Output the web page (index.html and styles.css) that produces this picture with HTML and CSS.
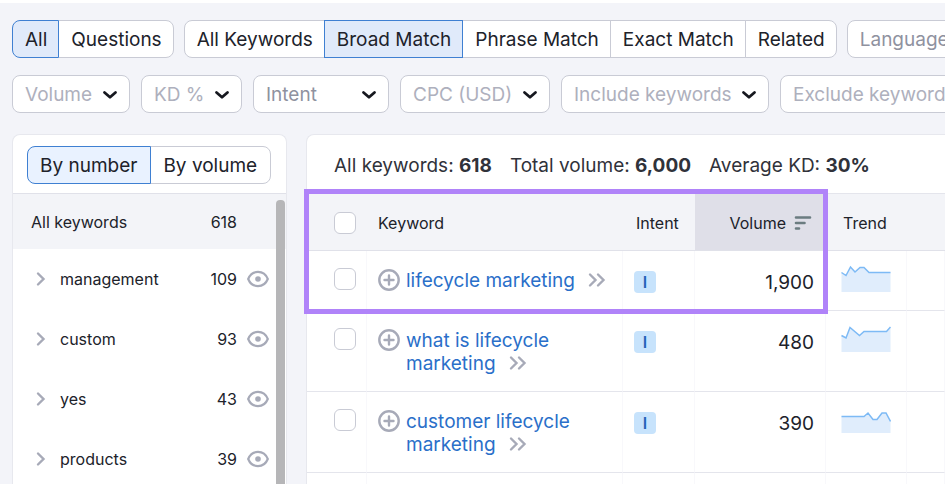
FILE: index.html
```
<!DOCTYPE html>
<html lang="en">
<head>
  <meta charset="UTF-8">
  <meta name="viewport" content="width=device-width, initial-scale=1">
  <title>Keyword Magic Tool</title>
  <link rel="stylesheet" href="styles.css">
</head>
<body>
  <!-- Shared icons -->
  <svg class="sprite" aria-hidden="true">
    <symbol id="chevron-down" viewBox="0 0 16 10"><path d="M2.500 2.500 8 7.300l5.500-4.800" fill="none" stroke="currentColor" stroke-width="2.800" stroke-linecap="round" stroke-linejoin="round"/></symbol>
    <symbol id="chevron-right" viewBox="0 0 10 16"><path d="m2 2.500 5.500 5.500L2 13.500" fill="none" stroke="currentColor" stroke-width="2.400" stroke-linecap="round"/></symbol>
    <symbol id="double-chevron" viewBox="0 0 18 16"><path d="m2 2.500 5.500 5.500L2 13.500M10 2.500 15.500 8 10 13.500" fill="none" stroke="currentColor" stroke-width="2.400" stroke-linecap="round"/></symbol>
    <symbol id="eye" viewBox="0 0 22 18"><path d="M1.200 9C3 4.500 6.500 1.900 11 1.900S19 4.500 20.800 9C19 13.500 15.500 16.100 11 16.100S3 13.500 1.200 9Z" fill="none" stroke="currentColor" stroke-width="2.200"/><circle cx="11" cy="9" r="2.800" fill="currentColor"/></symbol>
    <symbol id="plus-circle" viewBox="0 0 22 22"><circle cx="11" cy="11" r="9.700" fill="none" stroke="currentColor" stroke-width="2.400"/><path d="M11 6.500v9M6.500 11h9" fill="none" stroke="currentColor" stroke-width="2.400" stroke-linecap="round"/></symbol>
  </svg>

  <header class="filters">
    <div class="filter-row match-row">
      <div class="segmented">
        <button class="segment active" type="button">All</button>
        <button class="segment" type="button">Questions</button>
      </div>
      <div class="segmented">
        <button class="segment" type="button">All Keywords</button>
        <button class="segment active" type="button">Broad Match</button>
        <button class="segment" type="button">Phrase Match</button>
        <button class="segment" type="button">Exact Match</button>
        <button class="segment" type="button">Related</button>
      </div>
      <div class="dropdown dark"><select aria-label="Language"><option>Language</option></select><svg><use href="#chevron-down"/></svg></div>
    </div>
    <div class="filter-row">
      <div class="dropdown"><select aria-label="Volume"><option>Volume</option></select><svg><use href="#chevron-down"/></svg></div>
      <div class="dropdown"><select aria-label="Keyword difficulty"><option>KD %</option></select><svg><use href="#chevron-down"/></svg></div>
      <div class="dropdown dark wide"><select aria-label="Intent"><option>Intent</option></select><svg><use href="#chevron-down"/></svg></div>
      <div class="dropdown"><select aria-label="CPC"><option>CPC (USD)</option></select><svg><use href="#chevron-down"/></svg></div>
      <div class="dropdown"><select aria-label="Include keywords"><option>Include keywords</option></select><svg><use href="#chevron-down"/></svg></div>
      <div class="dropdown"><select aria-label="Exclude keywords"><option>Exclude keywords</option></select><svg><use href="#chevron-down"/></svg></div>
    </div>
  </header>

  <main class="content">
    <aside class="sidebar">
      <div class="sidebar-head">
        <div class="segmented">
          <button class="segment active" type="button">By number</button>
          <button class="segment" type="button">By volume</button>
        </div>
      </div>
      <div class="groups">
        <ul class="group-list">
          <li class="group all"><span class="name">All keywords</span><span>618</span></li>
          <li class="group"><button class="icon-button" type="button" aria-label="Expand management"><svg class="arrow"><use href="#chevron-right"/></svg></button><span class="name">management</span><span>109</span><button class="icon-button" type="button" aria-label="Hide management"><svg class="eye"><use href="#eye"/></svg></button></li>
          <li class="group"><button class="icon-button" type="button" aria-label="Expand custom"><svg class="arrow"><use href="#chevron-right"/></svg></button><span class="name">custom</span><span>93</span><button class="icon-button" type="button" aria-label="Hide custom"><svg class="eye"><use href="#eye"/></svg></button></li>
          <li class="group"><button class="icon-button" type="button" aria-label="Expand yes"><svg class="arrow"><use href="#chevron-right"/></svg></button><span class="name">yes</span><span>43</span><button class="icon-button" type="button" aria-label="Hide yes"><svg class="eye"><use href="#eye"/></svg></button></li>
          <li class="group"><button class="icon-button" type="button" aria-label="Expand products"><svg class="arrow"><use href="#chevron-right"/></svg></button><span class="name">products</span><span>39</span><button class="icon-button" type="button" aria-label="Hide products"><svg class="eye"><use href="#eye"/></svg></button></li>
        </ul>
        <div class="scroll-thumb"></div>
      </div>
    </aside>

    <section class="results">
      <div class="summary">
        <span>All keywords: <b>618</b></span>
        <span>Total volume: <b>6,000</b></span>
        <span>Average KD: <b>30%</b></span>
      </div>
      <div class="table-wrap">
        <table class="keywords">
          <colgroup>
            <col class="col-check"><col class="col-keyword"><col class="col-intent"><col class="col-volume"><col class="col-trend"><col>
          </colgroup>
          <thead>
            <tr>
              <th class="check"><input type="checkbox" aria-label="Select all"></th>
              <th>Keyword</th>
              <th class="intent">Intent</th>
              <th class="volume sorted"><span class="sort">Volume <svg width="18" height="14" viewBox="0 0 18 14"><path d="M2 1.500h14M2 7h8.500M2 12.500h3" stroke="#6b7c80" stroke-width="2.600" stroke-linecap="round"/></svg></span></th>
              <th>Trend</th>
              <th></th>
            </tr>
          </thead>
          <tbody>
            <tr>
              <td class="check"><input type="checkbox" aria-label="Select lifecycle marketing"></td>
              <td><div class="keyword"><svg class="plus"><use href="#plus-circle"/></svg><a href="#">lifecycle marketing <svg class="more"><use href="#double-chevron"/></svg></a></div></td>
              <td class="intent"><span class="badge">I</span></td>
              <td class="volume">1,900</td>
              <td class="trend"><svg width="50" height="32" viewBox="0 0 50 32"><path class="area" d="M.5 12.500 5 15.500l4.500-8.500L14 12l5-4.500h4l5 5h21.500V32H.5z"/><path class="line" d="M.5 12.500 5 15.500l4.500-8.500L14 12l5-4.500h4l5 5h21.500"/></svg></td>
              <td></td>
            </tr>
            <tr>
              <td class="check"><input type="checkbox" aria-label="Select what is lifecycle marketing"></td>
              <td><div class="keyword"><svg class="plus"><use href="#plus-circle"/></svg><a href="#">what is lifecycle<br>marketing <svg class="more"><use href="#double-chevron"/></svg></a></div></td>
              <td class="intent"><span class="badge">I</span></td>
              <td class="volume">480</td>
              <td class="trend"><svg width="50" height="32" viewBox="0 0 50 32"><path class="area" d="M.5 15.500 5 18 9 7.500l9.500 8 4.500-4h22.500l4-4.500v25H.5z"/><path class="line" d="M.5 15.500 5 18 9 7.500l9.500 8 4.500-4h22.500l4-4.500"/></svg></td>
              <td></td>
            </tr>
            <tr>
              <td class="check"><input type="checkbox" aria-label="Select customer lifecycle marketing"></td>
              <td><div class="keyword"><svg class="plus"><use href="#plus-circle"/></svg><a href="#">customer lifecycle<br>marketing <svg class="more"><use href="#double-chevron"/></svg></a></div></td>
              <td class="intent"><span class="badge">I</span></td>
              <td class="volume">390</td>
              <td class="trend"><svg width="50" height="32" viewBox="0 0 50 32"><path class="area" d="M.5 15.500H23l4-3.500 5 6.500h4l5-6.500h4l4.500 8.500V32H.5z"/><path class="line" d="M.5 15.500H23l4-3.500 5 6.500h4l5-6.500h4l4.500 8.500"/></svg></td>
              <td></td>
            </tr>
            <tr class="filler"><td></td><td></td><td></td><td></td><td></td><td></td></tr>
          </tbody>
        </table>
        <div class="highlight"></div>
      </div>
    </section>
  </main>
</body>
</html>
```
FILE: styles.css
```
* {
  box-sizing: border-box;
}
body {
  margin: 0;
  height: 100vh;
  overflow: hidden;
  display: flex;
  flex-direction: column;
  border-top: 3px solid #fff;
  background-color: #f3f4f9;
  color: #20222a;
  font-family: Inter, "Liberation Sans", sans-serif;
  font-size: 19px;
}
button, select {
  font: inherit;
  color: inherit;
}
.sprite {
  display: none;
}

/* Filters */
.filters {
  display: flex;
  flex-direction: column;
  gap: 17px;
  padding: 17px 0 21px 12px;
  overflow: hidden;
}
.filter-row {
  display: flex;
  gap: 11px;
}
.match-row {
  gap: 10px;
}
.segmented {
  display: flex;
  flex-shrink: 0;
}
.segment {
  height: 38px;
  padding: 0 11px 0 12px;
  margin-left: -1px;
  background-color: #fff;
  border: 1px solid #c9cbd5;
  white-space: nowrap;
}
.segment:first-child {
  margin-left: 0;
  border-radius: 8px 0 0 8px;
}
.segment:last-child {
  border-radius: 0 8px 8px 0;
}
.segment.active {
  position: relative;
  background-color: #e0eafa;
  border-color: #3f80d2;
}
.dropdown {
  position: relative;
  flex-shrink: 0;
}
.dropdown select {
  appearance: none;
  height: 38px;
  padding: 0 36px 0 12px;
  background-color: #fff;
  border: 1px solid #c9cbd5;
  border-radius: 8px;
  color: #aeb0bd;
}
.dropdown.dark select {
  color: #8f929f;
}
.dropdown.wide select {
  width: 136px;
}
.dropdown svg {
  position: absolute;
  right: 12px;
  top: 15px;
  width: 16px;
  height: 10px;
  color: #16181f;
  pointer-events: none;
}

/* Panels */
.content {
  flex: 1;
  min-height: 0;
  display: flex;
  gap: 19px;
  padding-left: 12px;
  overflow: hidden;
}
.sidebar {
  flex: 0 0 275px;
  display: flex;
  flex-direction: column;
  background-color: #fff;
  border: 1px solid #e7e8ee;
  border-bottom: 0;
  border-radius: 8px 8px 0 0;
}
.sidebar-head {
  padding: 11px 14px 9px;
  border-bottom: 1px solid #e0e1e9;
}
.sidebar .segment {
  padding: 0 13px 0 12px;
}
.sidebar .segment.active {
  background-color: #e9f2ff;
}
.groups {
  flex: 1;
  position: relative;
  min-height: 0;
  overflow: hidden;
}
.group-list {
  list-style: none;
  margin: 0;
  padding: 0;
  font-size: 16px;
}
.group {
  display: flex;
  align-items: center;
  height: 60px;
  padding: 0 17px 0 23px;
}
.group.all {
  height: 55px;
  padding: 0 49px 0 18px;
  background-color: #f3f4f8;
}
.group .name {
  flex: 1;
}
.icon-button {
  display: flex;
  padding: 0;
  border: 0;
  background: none;
  color: #a7aab8;
}
.arrow {
  width: 10px;
  height: 16px;
  margin-right: 14px;
}
.eye {
  width: 22px;
  height: 18px;
  margin-left: 10px;
}
.scroll-thumb {
  position: absolute;
  top: 6px;
  right: 1px;
  bottom: -8px;
  width: 9px;
  border-radius: 4px;
  background-color: #b6b6b8;
}

/* Results */
.results {
  flex: 1;
  min-width: 0;
  background-color: #fff;
  border-left: 1px solid #e7e8ee;
  border-top: 1px solid #e7e8ee;
  border-top-left-radius: 8px;
}
.summary {
  display: flex;
  align-items: center;
  gap: 18px;
  height: 58px;
  padding: 2px 0 0 27px;
  color: #30323a;
  white-space: nowrap;
}
.summary b {
  font-weight: 700;
}
.table-wrap {
  position: relative;
}
.keywords {
  width: 100%;
  table-layout: fixed;
  border-collapse: separate;
  border-spacing: 0;
  line-height: 23px;
}
.col-check { width: 60px; }
.col-keyword { width: 256px; }
.col-intent { width: 72px; }
.col-volume { width: 131px; }
.col-trend { width: 81px; }
.keywords th {
  height: 58px;
  padding: 2px 10px 0 11px;
  background-color: #f3f4f8;
  border-top: 1px solid #e4e5ec;
  border-bottom: 1px solid #e0e1e9;
  font-size: 16px;
  font-weight: 400;
  text-align: left;
}
.keywords th:nth-child(5) {
  padding-left: 17px;
}
.keywords .sorted {
  padding-right: 14px;
  background-color: #dfdfe8;
}
.sort {
  display: flex;
  align-items: center;
  justify-content: flex-end;
  gap: 8px;
}
.keywords td {
  padding: 17px 10px 17px 11px;
  border-right: 1px solid #f8f8fb;
  border-bottom: 1px solid #e4e5ec;
  vertical-align: top;
}
.keywords .check {
  padding-left: 27px;
}
.check input {
  appearance: none;
  display: block;
  width: 22px;
  height: 22px;
  margin: 0;
  background-color: #fff;
  border: 1px solid #c9cbd5;
  border-radius: 6px;
}
.keyword {
  display: flex;
  gap: 6px;
  padding-top: 1px;
  margin-bottom: -1px;
}
.keyword a {
  color: #2a6fc9;
  text-decoration: none;
  white-space: nowrap;
}
.plus {
  flex-shrink: 0;
  width: 22px;
  height: 22px;
  color: #a7aab8;
}
.more {
  width: 18px;
  height: 16px;
  margin-left: 8px;
  vertical-align: -1px;
  color: #a7aab8;
}
.keywords th.intent {
  padding-left: 13px;
}
.keywords td.intent {
  padding: 20px 0 0 11px;
}
.badge {
  display: block;
  width: 22px;
  height: 22px;
  border-radius: 4px;
  background-color: #c7e3fc;
  color: #2563b8;
  font-size: 16px;
  font-weight: 600;
  line-height: 22px;
  text-align: center;
}
.keywords td.volume {
  padding-top: 20px;
  padding-bottom: 16px;
  padding-right: 11px;
  text-align: right;
}
.keywords .trend {
  padding: 9px 15px 0;
}
.trend svg {
  display: block;
}
.area {
  fill: #e0edfc;
}
.line {
  fill: none;
  stroke: #7dbaf5;
  stroke-width: 1.5;
}

/* Frame around the header and the first keyword */
.highlight {
  position: absolute;
  top: -4px;
  left: -3px;
  width: 524px;
  height: 125px;
  border: 5px solid #b083f9;
}
```
